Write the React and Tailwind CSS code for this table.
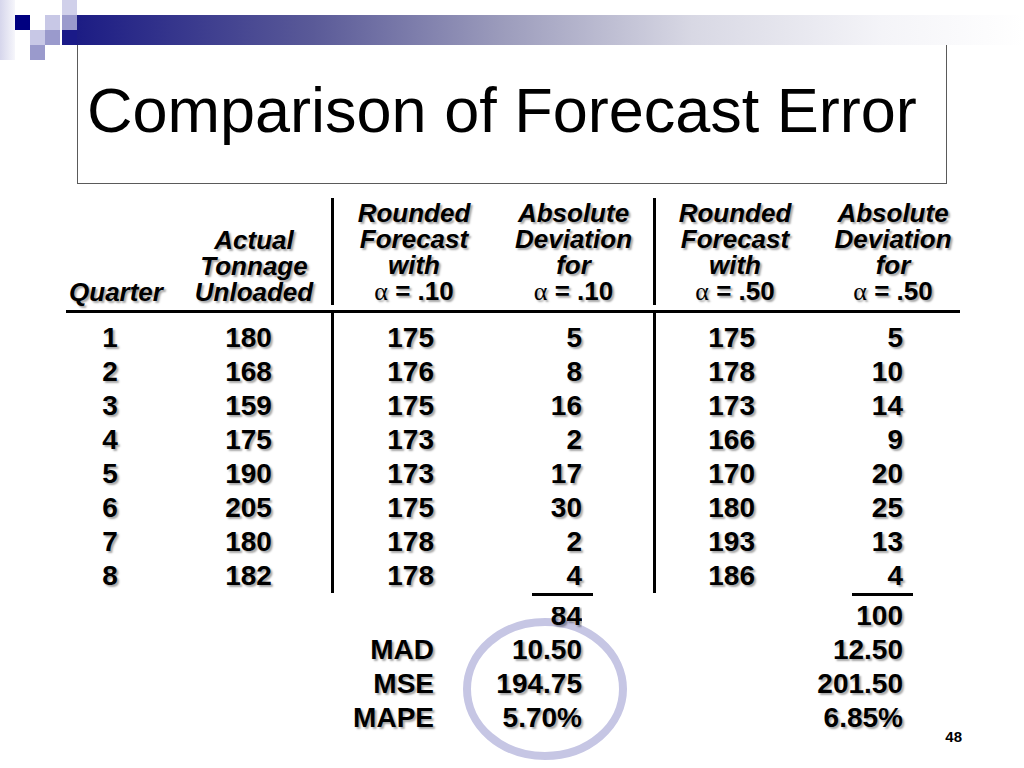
const body = [
  ["1", "180", "175", "5", "175", "5"],
  ["2", "168", "176", "8", "178", "10"],
  ["3", "159", "175", "16", "173", "14"],
  ["4", "175", "173", "2", "166", "9"],
  ["5", "190", "173", "17", "170", "20"],
  ["6", "205", "175", "30", "180", "25"],
  ["7", "180", "178", "2", "193", "13"],
  ["8", "182", "178", "4", "186", "4"],
];

const shadow = "[text-shadow:2px_2px_2px_rgba(0,0,0,0.35)]";
const cols = "grid grid-cols-[100px_165px_163px_159px_161px_146px]";

function Alpha({ v }) {
  return (
    <span className="not-italic">
      <span className="font-['Liberation_Serif'] font-normal">α</span> = {v}
    </span>
  );
}

function Head({ lines, className = "" }) {
  return (
    <div className={`flex flex-col items-center italic leading-[26px] ${className}`}>
      {lines.map((l, i) => (
        <div key={i}>{l}</div>
      ))}
    </div>
  );
}

function Decor() {
  return (
    <svg width="77" height="60" viewBox="0 0 77 60" className="block shrink-0">
      <defs>
        <linearGradient id="strip" x1="0" x2="1" y1="0" y2="0">
          <stop offset="0" stopColor="#d6d6ec" />
          <stop offset="1" stopColor="#f6f6fb" />
        </linearGradient>
      </defs>
      <rect x="0" y="0" width="15" height="60" fill="url(#strip)" />
      <rect x="15" y="15" width="15" height="15" fill="#000080" />
      <rect x="45" y="15" width="15" height="15" fill="#c8c8e6" />
      <rect x="62" y="0" width="15" height="15" fill="#d0d0ea" />
      <rect x="62" y="15" width="15" height="15" fill="#9a9acc" />
      <rect x="30" y="30" width="15" height="15" fill="#c8c8e6" />
      <rect x="45" y="30" width="15" height="15" fill="#9a9acc" />
      <rect x="62" y="30" width="15" height="15" fill="#1a1a88" />
      <rect x="30" y="45" width="15" height="15" fill="#9a9acc" />
    </svg>
  );
}

export default function App() {
  return (
    <div className="w-[1024px] h-[768px] bg-white overflow-hidden font-['Liberation_Sans',Arial,sans-serif] text-black">
      <div className="flex">
        <Decor />
        <div className="flex-1 mt-[15px] h-[30px] bg-[linear-gradient(to_right,#1c1c84,#5a5a98_25%,#9c9cbc_45%,#d8d8e4_65%,#f4f4f8_85%,#ffffff)]" />
      </div>

      <div className="-mt-[23px] ml-[77px] w-[870px] h-[147px] border border-[#5a5a5a] border-t-2 border-t-[#404040] pl-[9px] pt-[40px]">
        <h1 className="text-[63px] leading-none font-normal">Comparison of Forecast Error</h1>
      </div>

      <div className="ml-[66px] w-[894px] mt-[14px] font-bold">
        <div className={`${cols} items-end text-[26px] pb-[5px] ${shadow}`}>
          <Head lines={["Quarter"]} />
          <Head lines={["Actual", "Tonnage", "Unloaded"]} className="pl-[11px]" />
          <Head
            lines={["Rounded", "Forecast", "with", <Alpha v=".10" />]}
            className="border-l-[3px] border-black pt-[2px]"
          />
          <Head lines={["Absolute", "Deviation", "for", <Alpha v=".10" />]} />
          <Head
            lines={["Rounded", "Forecast", "with", <Alpha v=".50" />]}
            className="border-l-[3px] border-black pt-[2px]"
          />
          <Head lines={["Absolute", "Deviation", "for", <Alpha v=".50" />]} className="pl-[12px]" />
        </div>

        <div className="h-[3px] bg-black" />

        <div className={`${cols} text-[28px] leading-[34px] ${shadow}`}>
          {[0, 1, 2, 3, 4, 5].map((c) => (
            <div
              key={c}
              className={`flex flex-col pt-[8px] ${c === 2 || c === 4 ? "border-l-[3px] border-black" : ""} ${
                c === 0 ? "items-center pr-[12px]" : c === 1 ? "items-center" : "items-end"
              } ${c === 2 ? "pr-[60px]" : c === 3 ? "pr-[71px]" : c === 4 ? "pr-[59px]" : c === 5 ? "pr-[57px]" : ""}`}
            >
              {body.map((r, i) => (
                <div key={i} className="h-[34px]">
                  {r[c]}
                </div>
              ))}
            </div>
          ))}
        </div>

        <div className="relative">
          <svg
            width="164"
            height="142"
            viewBox="0 0 164 142"
            className="absolute left-[397px] top-[25px] pointer-events-none"
          >
            <ellipse cx="82" cy="71" rx="78" ry="67" fill="none" stroke="#c6c6e4" strokeWidth="8" />
          </svg>

          <div className={`relative ${cols} text-[28px] leading-[34px] ${shadow}`}>
            <div />
            <div />
            <div className="flex flex-col items-end pr-[60px] pt-[6px]">
              <div className="h-[34px]" />
              <div className="h-[34px]">MAD</div>
              <div className="h-[34px]">MSE</div>
              <div className="h-[34px]">MAPE</div>
            </div>
            <div className="flex flex-col items-end pr-[71px]">
              <div className="h-[3px] w-[61px] mr-[-11px] bg-black" />
              <div className="h-[26px] mt-[11px] overflow-hidden">
                <div className="-mt-[8px]">84</div>
              </div>
              <div className="h-[34px]">10.50</div>
              <div className="h-[34px]">194.75</div>
              <div className="h-[34px]">5.70%</div>
            </div>
            <div />
            <div className="flex flex-col items-end pr-[57px]">
              <div className="h-[3px] w-[61px] mr-[-10px] bg-black" />
              <div className="h-[34px] mt-[3px]">100</div>
              <div className="h-[34px]">12.50</div>
              <div className="h-[34px]">201.50</div>
              <div className="h-[34px]">6.85%</div>
            </div>
          </div>
        </div>

        <div className="flex justify-end w-[896px] -mt-[7px] text-[15px] leading-[17px]">48</div>
      </div>
    </div>
  );
}
